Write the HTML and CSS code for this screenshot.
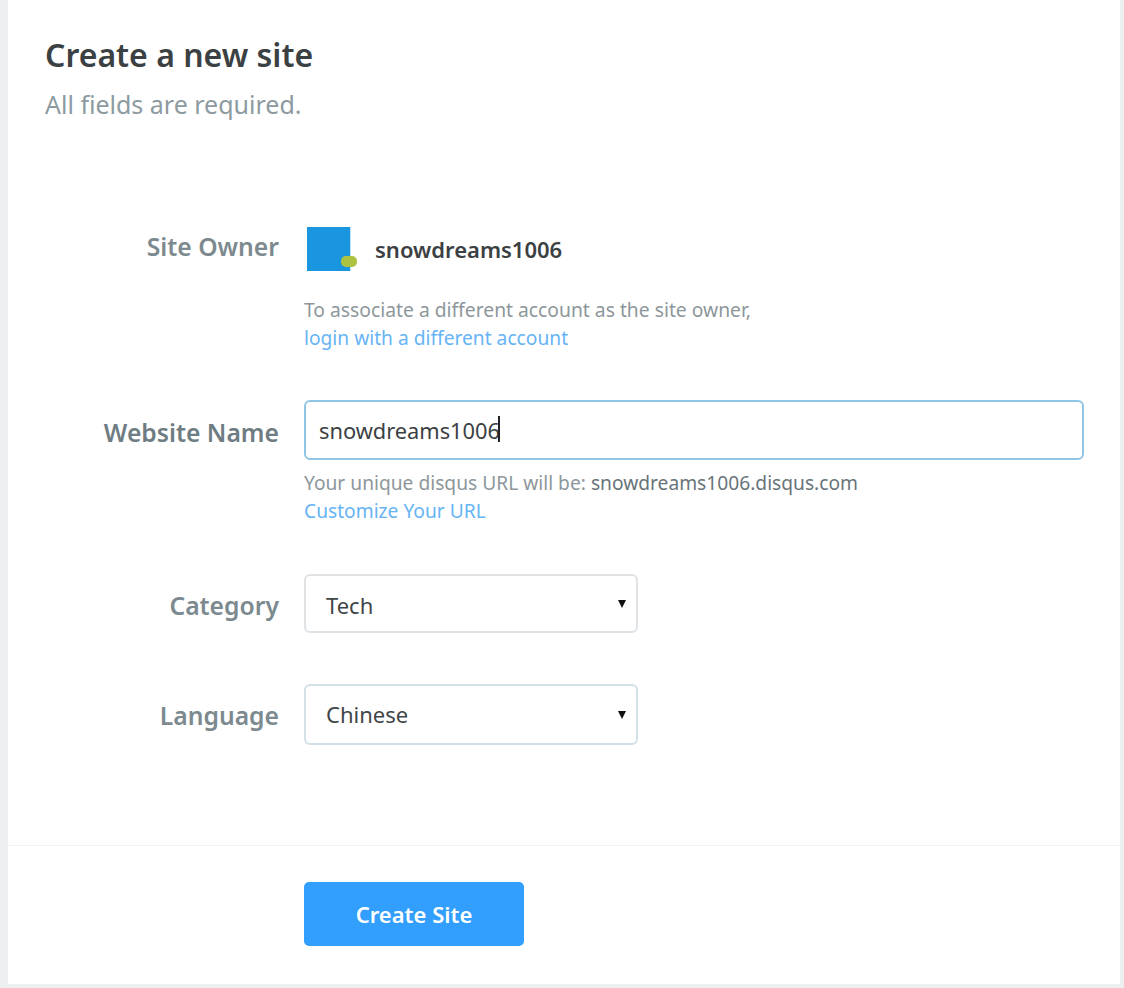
FILE: index.html
```html
<!DOCTYPE html>
<html lang="en">
<head>
  <meta charset="UTF-8">
  <meta name="viewport" content="width=device-width, initial-scale=1.0">
  <title>Create a new site</title>
  <link rel="stylesheet" href="styles.css">
</head>
<body>
  <div class="card">
    <div class="head">
      <h1>Create a new site</h1>
      <p class="sub">All fields are required.</p>
    </div>
    <form class="form">
      <div class="row row-owner">
        <div class="label">Site Owner</div>
        <div class="field">
          <div class="owner">
            <div class="avatar"><span class="dot"></span></div>
            <span class="owner-name">snowdreams1006</span>
          </div>
          <p class="help">To associate a different account as the site owner,</p>
          <a class="link" href="#">login with a different account</a>
        </div>
      </div>
      <div class="row row-name">
        <div class="label label-dark">Website Name</div>
        <div class="field">
          <div class="input">snowdreams100<span class="caret-wrap">6<span class="caret"></span></span></div>
          <p class="help help-url">Your unique disqus URL will be: <span class="url">snowdreams1006.disqus.com</span></p>
          <a class="link" href="#">Customize Your URL</a>
        </div>
      </div>
      <div class="row row-category">
        <div class="label">Category</div>
        <div class="field">
          <div class="select"><span>Tech</span><i class="arrow"></i></div>
        </div>
      </div>
      <div class="row row-language">
        <div class="label">Language</div>
        <div class="field">
          <div class="select select-lang"><span>Chinese</span><i class="arrow"></i></div>
        </div>
      </div>
    </form>
    <div class="foot">
      <button type="button" class="btn">Create Site</button>
    </div>
  </div>
</body>
</html>
```
FILE: styles.css
```css
* {
  margin: 0;
  padding: 0;
  box-sizing: border-box;
}
body {
  font-family: 'Noto Sans', sans-serif;
  background-color: #edeff0;
  padding: 0 4px 4px 8px;
  height: 988px;
  overflow: hidden;
}
.card {
  background-color: #fff;
  height: 984px;
}
.head {
  padding: 36px 37px 0;
  height: 165px;
}
h1 {
  font-size: 32px;
  line-height: 38px;
  font-weight: 600;
  color: #3b4143;
}
.sub {
  margin-top: 14px;
  font-size: 25px;
  line-height: 32px;
  color: #8d9a9f;
}
.row {
  display: flex;
}
.label {
  width: 271px;
  text-align: right;
  font-size: 24.7px;
  font-weight: 600;
  color: #7c8a8f;
  line-height: 30px;
  flex-shrink: 0;
}
.label-dark {
  color: #6f7d83;
}
.field {
  margin-left: 25px;
  flex: 1;
}
.row-owner {
  padding-top: 62px;
}
.row-owner .label {
  margin-top: 5px;
}
.owner {
  display: flex;
  align-items: center;
  height: 44px;
  margin-left: 3px;
}
.avatar {
  position: relative;
  width: 44px;
  height: 44px;
  background-color: #1a95e0;
  border-right: 1px solid #bfe0f5;
}
.dot {
  position: absolute;
  right: -7px;
  bottom: 4px;
  width: 16px;
  height: 11px;
  border-radius: 5px;
  background-color: #adc243;
}
.owner-name {
  margin-left: 24px;
  font-size: 22px;
  font-weight: 600;
  color: #3b4143;
}
.help {
  margin-top: 25px;
  font-size: 19.3px;
  line-height: 28px;
  color: #8d979b;
}
.link {
  display: block;
  font-size: 19.2px;
  line-height: 28px;
  color: #66b4f5;
  text-decoration: none;
}
.row-name {
  margin-top: 48px;
}
.row-name .label {
  margin-top: 18px;
}
.input {
  width: 780px;
  height: 60px;
  border: 2px solid #8fc6e4;
  border-radius: 6px;
  padding: 0 13px;
  font-size: 21.8px;
  line-height: 58px;
  color: #3b4143;
}
.caret-wrap {
  position: relative;
}
.caret {
  position: absolute;
  right: 0;
  top: 0;
  width: 1.5px;
  height: 26px;
  background-color: #222;
}
.help-url {
  margin-top: 9px;
  font-size: 19.2px;
}
.url {
  color: #687479;
}
.row-category {
  margin-top: 49px;
}
.row-category .label,
.row-language .label {
  margin-top: 17px;
}
.row-category .select span {
  margin-top: 2px;
}
.row-language {
  margin-top: 51px;
}
.select {
  display: flex;
  align-items: center;
  justify-content: space-between;
  width: 334px;
  height: 59px;
  border: 2px solid #dfe3e6;
  border-radius: 6px;
  padding: 0 10px 0 20px;
  font-size: 22px;
  color: #3f4648;
}
.select-lang {
  height: 61px;
  border-color: #d3e0e8;
}
.select-lang span {
  margin-top: -2px;
}
.arrow {
  width: 0;
  height: 0;
  border-left: 4px solid transparent;
  border-right: 4px solid transparent;
  border-top: 8px solid #111;
}
.foot {
  margin-top: 100px;
  border-top: 1px solid #f1f2f3;
  padding: 36px 0 0 296px;
}
.btn {
  display: block;
  width: 220px;
  height: 64px;
  border: none;
  border-radius: 5px;
  background-color: #329efd;
  color: #fff;
  font-family: inherit;
  font-size: 22px;
  font-weight: 600;
  cursor: pointer;
}
```
